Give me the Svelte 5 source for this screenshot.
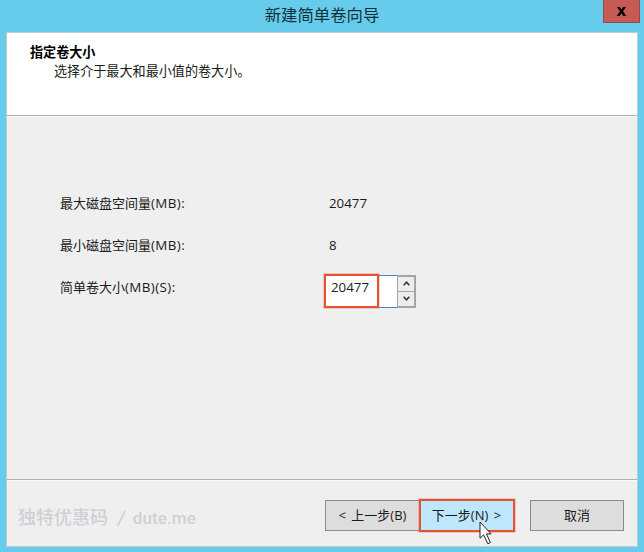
<script lang="ts">
	let size = $state(20477);
	const min = 8;
	const max = 20477;

	function step(delta: number) {
		size = Math.min(max, Math.max(min, size + delta));
	}
</script>

<div class="window">
	<div class="titlebar">
		<span class="title">新建简单卷向导</span>
		<button class="close" aria-label="关闭">
			<svg width="11" height="9" viewBox="0 0 12 10">
				<path d="M1 0h3.2L6 2.8 7.8 0H11L7.7 4.8 11.2 10H8L6 6.9 4 10H.8l3.5-5.2z" />
			</svg>
		</button>
	</div>

	<div class="dialog">
		<header>
			<h1>指定卷大小</h1>
			<p>选择介于最大和最小值的卷大小。</p>
		</header>

		<main>
			<span>最大磁盘空间量<span class="latin">(MB):</span></span>
			<span class="value">{max}</span>
			<span>最小磁盘空间量<span class="latin">(MB):</span></span>
			<span class="value">{min}</span>
			<label for="size">简单卷大小<span class="latin">(MB)(S):</span></label>
			<div class="spinner">
				<input id="size" bind:value={size} />
				<div class="arrows">
					<button aria-label="增加" onclick={() => step(1)}>
						<svg width="7" height="5" viewBox="0 0 7 5"><path d="M.7 4.2 3.5 1.2l2.8 3" /></svg>
					</button>
					<button aria-label="减少" onclick={() => step(-1)}>
						<svg width="7" height="5" viewBox="0 0 7 5"><path d="M.7.8l2.8 3 2.8-3" /></svg>
					</button>
				</div>
				<div class="mark"></div>
			</div>
		</main>

		<footer>
			<span class="site">独特优惠码<i>/</i><b>dute.me</b></span>
			<button class="btn back">&lt; 上一步(B)</button>
			<button class="btn next">
				下一步(N) &gt;
				<svg class="cursor" width="13" height="24" viewBox="0 0 13 24">
					<path d="M1 1v16.2l3.6-3.4 4.2 9 2.6-1.3-4-8.6h4.7z" />
				</svg>
			</button>
			<button class="btn cancel">取消</button>
		</footer>
	</div>
</div>

<style>
	:global(body) {
		margin: 0;
	}

	.window {
		box-sizing: border-box;
		width: 644px;
		height: 552px;
		padding: 0 6px 5px;
		display: flex;
		flex-direction: column;
		background: #67ccec;
		color: #1a1a1a;
		font: 13px/18px 'Open Sans', 'Noto Sans CJK SC', sans-serif;
		overflow: hidden;
	}

	button,
	input {
		font: inherit;
		color: inherit;
		margin: 0;
		padding: 0;
		box-sizing: border-box;
		border-radius: 0;
		outline: none;
	}

	.titlebar {
		height: 32px;
		display: grid;
		grid-template-columns: 37px 1fr 37px;
		flex: none;
	}

	.title {
		grid-column: 2;
		text-align: center;
		font-size: 16.4px;
		line-height: 30px;
		color: #12303a;
	}

	.close {
		width: 37px;
		height: 23px;
		margin-left: 2px;
		display: flex;
		align-items: center;
		justify-content: center;
		background: #c75a52;
		border: 1px solid #8a4d50;
		border-top: 0;
	}

	.dialog {
		flex: 1;
		width: 632px;
		box-sizing: border-box;
		border: 1px solid #b9cdd5;
		display: flex;
		flex-direction: column;
		background: #efefef;
	}

	header {
		height: 83px;
		box-sizing: border-box;
		padding: 10px 0 0 23px;
		background: #fff;
		border-bottom: 1px solid #b0b0b0;
		box-shadow: 0 1px #fafafa;
	}

	h1 {
		margin: 0;
		font-size: 13.1px;
		line-height: 19px;
		color: #000;
	}

	p {
		margin: 0 0 0 24px;
		font-size: 13.1px;
	}

	main {
		flex: 1;
		display: grid;
		grid-template-columns: 265px 1fr;
		grid-auto-rows: 42px;
		align-content: start;
		align-items: center;
		padding: 66px 0 0 53px;
	}

	.latin {
		font-size: 13.4px;
		letter-spacing: 0.4px;
	}

	.value {
		padding-left: 4px;
		font-size: 13.3px;
	}

	.spinner {
		position: relative;
		display: flex;
		width: 91px;
		height: 33px;
		margin-top: 8px;
	}

	input {
		width: 72px;
		border: 1px solid #4a88ad;
		border-right: 0;
		background: #fff;
		padding: 0 0 8px 5px;
		font-size: 13.3px;
	}

	.arrows {
		flex: 1;
		display: flex;
		flex-direction: column;
		border: 2px solid #a3a5ac;
		border-left-width: 1px;
		background: #a3a5ac;
		gap: 1px;
	}

	.arrows button {
		flex: 1;
		display: flex;
		align-items: center;
		justify-content: center;
		background: #ededed;
		border: 0;
	}

	.arrows path {
		fill: none;
		stroke: #333;
		stroke-width: 1.6;
	}

	.mark {
		position: absolute;
		left: -1px;
		top: -1px;
		width: 51px;
		height: 30px;
		border: 2px solid #e8512f;
		box-shadow: 0 0 0 0.5px #e8512f80;
		pointer-events: none;
	}

	footer {
		height: 67px;
		box-sizing: border-box;
		display: flex;
		align-items: center;
		padding: 4px 13px 0 11px;
		border-top: 1px solid #b0b0b0;
		box-shadow: inset 0 1px #fafafa;
	}

	.site {
		width: 307px;
		padding-top: 6px;
		font-family: 'Roboto', 'Noto Sans CJK SC', sans-serif;
		font-size: 18px;
		font-weight: 500;
		color: #cfcfd5;
	}

	.site i {
		margin: 0 8px 0 10px;
	}

	.site b {
		font-size: 17px;
		font-weight: 500;
		letter-spacing: 0.1px;
	}

	.btn {
		height: 31px;
		background: #ddd;
		border: 1px solid #8b8b8b;
		white-space: nowrap;
		word-spacing: 2px;
	}

	.back {
		width: 94px;
		border-right-width: 0;
	}

	.next {
		position: relative;
		width: 96px;
		height: 33px;
		background: #bee6fd;
		border: 2px solid #e8512f;
		box-shadow: 0 0 0 0.5px #e8512f80;
		padding-right: 1px;
	}

	.cancel {
		width: 94px;
		margin-left: auto;
	}

	.cursor {
		position: absolute;
		left: 58px;
		top: 20px;
	}

	.cursor path {
		fill: #fff;
		stroke: #222;
	}
</style>
